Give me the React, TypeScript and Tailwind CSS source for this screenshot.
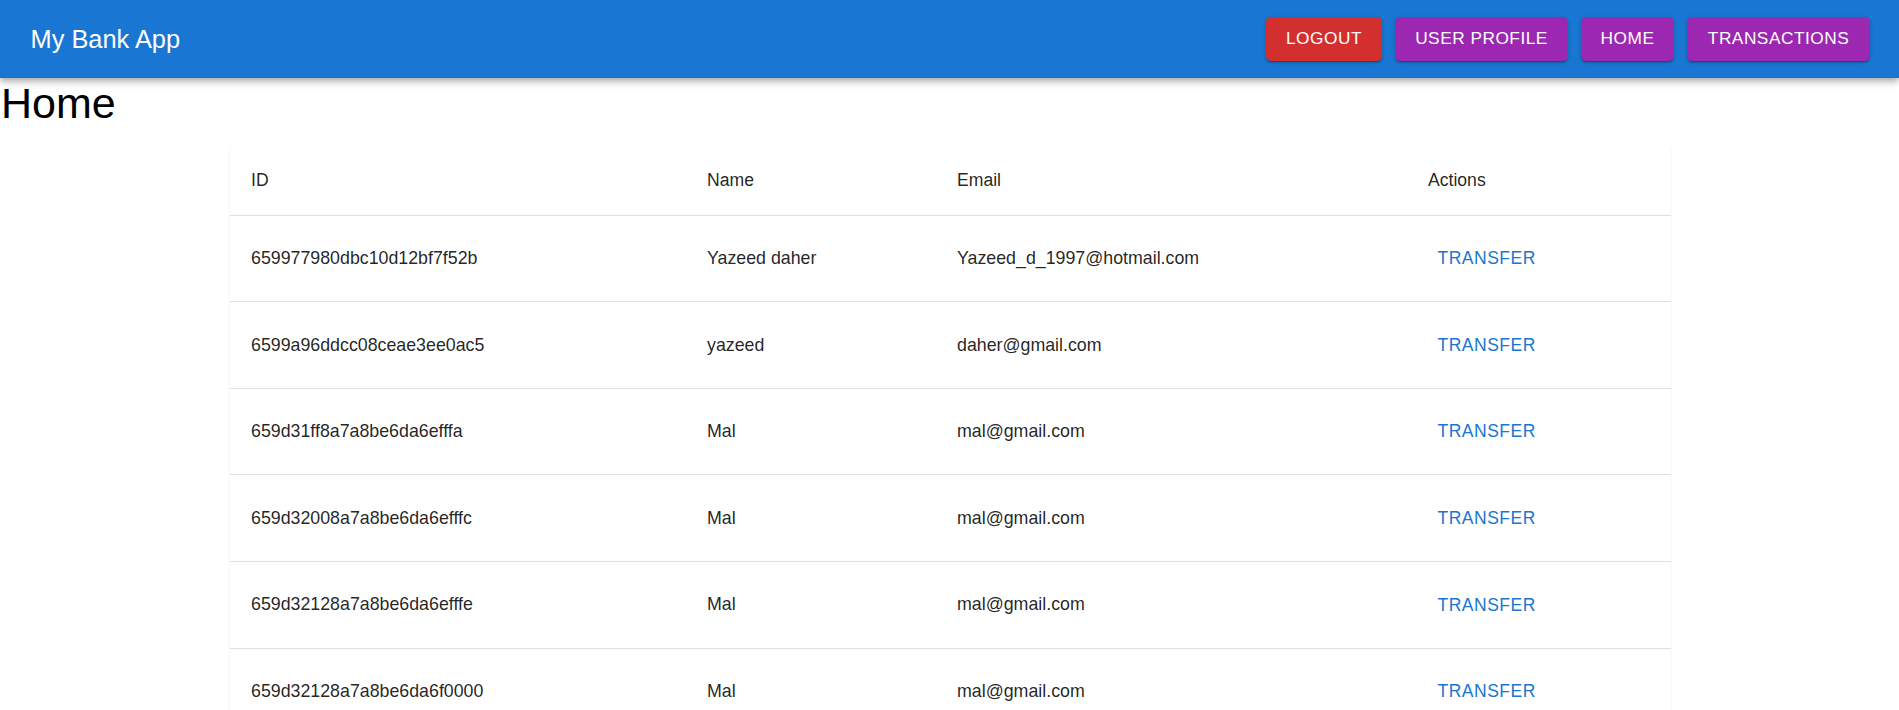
import React from "react";

const rows = [
  ["659977980dbc10d12bf7f52b", "Yazeed daher", "Yazeed_d_1997@hotmail.com"],
  ["6599a96ddcc08ceae3ee0ac5", "yazeed", "daher@gmail.com"],
  ["659d31ff8a7a8be6da6efffa", "Mal", "mal@gmail.com"],
  ["659d32008a7a8be6da6efffc", "Mal", "mal@gmail.com"],
  ["659d32128a7a8be6da6efffe", "Mal", "mal@gmail.com"],
  ["659d32128a7a8be6da6f0000", "Mal", "mal@gmail.com"],
  ["659d32128a7a8be6da6f0002", "Mal", "mal@gmail.com"],
];

const navBtn =
  "h-[44px] rounded-[5px] text-white text-[17.3px] uppercase tracking-[0.02857em] flex items-center justify-center shadow-[0px_3px_1px_-2px_rgba(0,0,0,0.2),0px_2px_2px_0px_rgba(0,0,0,0.14),0px_1px_5px_0px_rgba(0,0,0,0.12)]";

export default function App() {
  return (
    <div
      className="min-h-screen bg-white text-[rgba(0,0,0,0.87)]"
      style={{ fontFamily: '"Liberation Sans", Arial, sans-serif' }}
    >
      <header className="relative z-10 h-[77.5px] bg-[#1976d2] flex items-center justify-between pl-[30.5px] pr-[29px] shadow-[0px_2px_5px_-1px_rgba(0,0,0,0.2),0px_5px_6px_0px_rgba(0,0,0,0.14),0px_1px_12px_0px_rgba(0,0,0,0.12)]">
        <div className="text-white text-[25.4px] leading-[30px]">My Bank App</div>
        <nav className="flex items-center gap-[13px]">
          <button className={`${navBtn} w-[116px] bg-[#d32f2f]`}>Logout</button>
          <button className={`${navBtn} w-[173px] bg-[#9c27b0]`}>User Profile</button>
          <button className={`${navBtn} w-[93px] bg-[#9c27b0]`}>Home</button>
          <button className={`${navBtn} w-[183px] bg-[#9c27b0]`}>Transactions</button>
        </nav>
      </header>

      <h1 className="pl-[1px] text-[43px] leading-[50px] text-black">Home</h1>

      <div className="mt-[17.5px] ml-[229.5px] w-[1441px] bg-white rounded-[5px] shadow-[0px_2px_1px_-1px_rgba(0,0,0,0.08),0px_1px_1px_0px_rgba(0,0,0,0.06),0px_1px_3px_0px_rgba(0,0,0,0.07)]">
        <div className="grid grid-cols-[457px_250px_471px_263px] h-[70.6px] border-b border-[#e0e0e0] items-center text-[17.6px]">
          <div className="pl-[21.5px]">ID</div>
          <div className="pl-[20.5px]">Name</div>
          <div className="pl-[20.5px]">Email</div>
          <div className="pl-[20.5px]">Actions</div>
        </div>
        {rows.map((r) => (
          <div
            key={r[0]}
            className="grid grid-cols-[457px_250px_471px_263px] h-[86.6px] border-b border-[#e0e0e0] items-center text-[17.8px]"
          >
            <div className="pl-[21.5px]">{r[0]}</div>
            <div className="pl-[20.5px]">{r[1]}</div>
            <div className="pl-[20.5px]">{r[2]}</div>
            <div className="pl-[20px]">
              <button className="h-[44px] px-[10px] rounded-[5px] text-[#1976d2] text-[17.5px] uppercase tracking-[0.02857em]">
                Transfer
              </button>
            </div>
          </div>
        ))}
      </div>
    </div>
  );
}
